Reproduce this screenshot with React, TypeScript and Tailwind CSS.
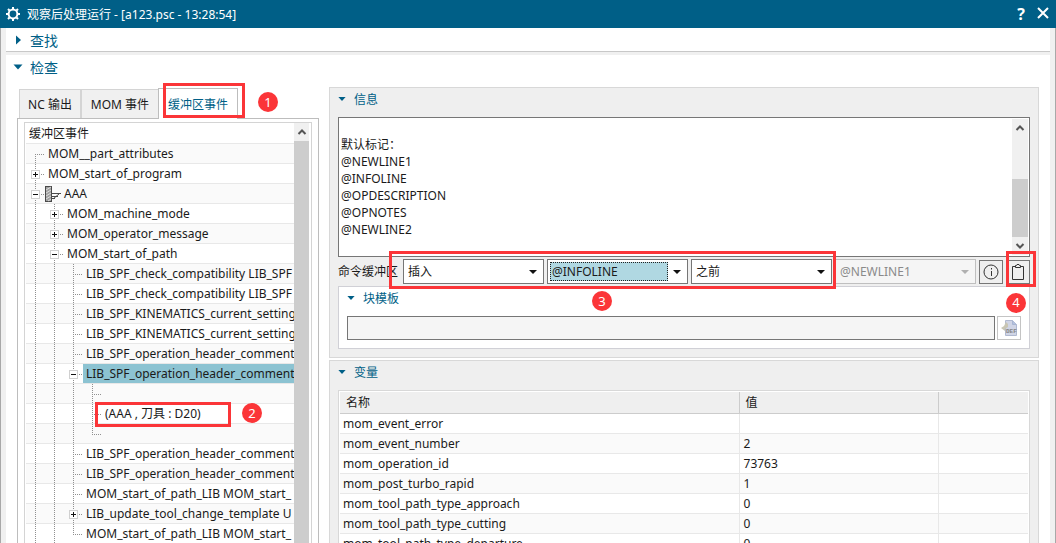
import React from "react";
import { clsx } from "clsx";

type Guide = "line" | "first" | "tee" | "last" | "plus" | "minus";

interface TreeNode {
  label: string;
  guides: Guide[];
  icon?: boolean;
  selected?: boolean;
  marked?: boolean;
}

const TREE: TreeNode[] = [
  { label: "MOM__part_attributes", guides: ["first"] },
  { label: "MOM_start_of_program", guides: ["plus"] },
  { label: "AAA", guides: ["minus"], icon: true },
  { label: "MOM_machine_mode", guides: ["line", "plus"] },
  { label: "MOM_operator_message", guides: ["line", "plus"] },
  { label: "MOM_start_of_path", guides: ["line", "minus"] },
  { label: "LIB_SPF_check_compatibility LIB_SPF", guides: ["line", "line", "tee"] },
  { label: "LIB_SPF_check_compatibility LIB_SPF", guides: ["line", "line", "tee"] },
  { label: "LIB_SPF_KINEMATICS_current_setting", guides: ["line", "line", "tee"] },
  { label: "LIB_SPF_KINEMATICS_current_setting", guides: ["line", "line", "tee"] },
  { label: "LIB_SPF_operation_header_comment", guides: ["line", "line", "tee"] },
  { label: "LIB_SPF_operation_header_comment", guides: ["line", "line", "minus"], selected: true },
  { label: "", guides: ["line", "line", "line", "tee"] },
  { label: "(AAA , 刀具 : D20)", guides: ["line", "line", "line", "tee"], marked: true },
  { label: "", guides: ["line", "line", "line", "last"] },
  { label: "LIB_SPF_operation_header_comment", guides: ["line", "line", "tee"] },
  { label: "LIB_SPF_operation_header_comment", guides: ["line", "line", "tee"] },
  { label: "MOM_start_of_path_LIB MOM_start_", guides: ["line", "line", "tee"] },
  { label: "LIB_update_tool_change_template U", guides: ["line", "line", "plus"] },
  { label: "MOM_start_of_path_LIB MOM_start_", guides: ["line", "line", "last"] },
];

const VARIABLES = [
  ["mom_event_error", ""],
  ["mom_event_number", "2"],
  ["mom_operation_id", "73763"],
  ["mom_post_turbo_rapid", "1"],
  ["mom_tool_path_type_approach", "0"],
  ["mom_tool_path_type_cutting", "0"],
  ["mom_tool_path_type_departure", "0"],
];

const INFO = "\n默认标记：\n@NEWLINE1\n@INFOLINE\n@OPDESCRIPTION\n@OPNOTES\n@NEWLINE2";

const GuideCell: React.FC<{ kind: Guide }> = ({ kind }) => {
  const box = kind === "plus" || kind === "minus";
  return (
    <svg width="19" height="20" viewBox="0 0 19 20" shapeRendering="crispEdges" className="shrink-0" fill="none">
      <path
        d={kind === "first" ? "M9.5 10V20" : kind === "last" ? "M9.5 0V11" : "M9.5 0V20"}
        stroke="#909090"
        strokeDasharray="1 1"
      />
      {kind !== "line" && <path d="M9 10.5H18" stroke="#909090" strokeDasharray="1 1" />}
      {box && <rect x="5.5" y="6.5" width="8" height="8" fill="#fff" stroke="#d0d0d0" />}
      {box && <path d={kind === "plus" ? "M7 10.5H12M9.5 8V13" : "M7 10.5H12"} stroke="#111" />}
    </svg>
  );
};

const ToolIcon = () => (
  <svg width="16" height="18" viewBox="0 0 16 18" className="shrink-0">
    <rect x="0.5" y="2.5" width="6" height="15" fill="#a0a0a0" stroke="#4a4a4a" />
    <path d="M1 6L6 3M1 9L6 6M1 12L6 9M1 15L6 12M3 17L6 15" stroke="#dcdcdc" />
    <path d="M7 9.5H16M7 12.5H13M8 15L14 10M7 14.5H10" stroke="#4a4a4a" fill="none" />
  </svg>
);

const Triangle: React.FC<{ open?: boolean; small?: boolean }> = ({ open = true, small }) => (
  <svg
    width={small ? 8 : 10}
    height={small ? 8 : 10}
    viewBox="0 0 10 10"
    className="shrink-0"
    fill="#005f87"
  >
    <path d={open ? "M0.5 2.5H9.5L5 7.5Z" : "M3 0.5V9.5L8 5Z"} />
  </svg>
);

const Heading: React.FC<{ children: React.ReactNode }> = ({ children }) => (
  <button type="button" className="flex h-[22px] items-center gap-2 text-[#005f87]">
    <Triangle small />
    {children}
  </button>
);

const Badge: React.FC<{ className?: string; children: React.ReactNode }> = ({ className, children }) => (
  <span
    className={clsx(
      "pointer-events-none absolute z-10 flex size-5 items-center justify-center rounded-full bg-[#fb3538] text-[13px] text-white",
      className
    )}
  >
    {children}
  </span>
);

const Marker: React.FC<{ className: string }> = ({ className }) => (
  <span className={clsx("pointer-events-none absolute z-10 border-3 border-[#fb3538]", className)} />
);

const Chevron: React.FC<{ down?: boolean }> = ({ down }) => (
  <svg width="10" height="10" viewBox="0 0 10 10" fill="none" stroke="#555" strokeWidth="2">
    <path d={down ? "M1.5 3L5 6.5L8.5 3" : "M1.5 7L5 3.5L8.5 7"} />
  </svg>
);

interface PickerProps {
  label: string;
  value: string;
  active?: boolean;
  disabled?: boolean;
}

const Picker: React.FC<PickerProps> = ({ label, value, active, disabled }) => (
  <div
    className={clsx(
      "flex h-[25px] min-w-0 items-center border p-[2px]",
      disabled ? "shrink grow basis-1 border-[#bfbfbf] bg-[#f5f5f5]" : "flex-1 border-[#767676] bg-white"
    )}
  >
    <select
      aria-label={label}
      disabled={disabled}
      defaultValue={value}
      className={clsx(
        "h-[19px] min-w-0 flex-1 appearance-none leading-[17px] outline-none",
        active ? "border border-dotted border-[#222] bg-[#b0d8e2] px-px" : "px-[2px]",
        disabled && "text-[#8a8a8a] opacity-100"
      )}
    >
      <option>{value}</option>
    </select>
    <svg width="17" height="8" viewBox="0 0 17 8" className="shrink-0" fill={disabled ? "#b0b0b0" : "#111"}>
      <path d="M5 2H13L9 6Z" />
    </svg>
  </div>
);

const TreeRow: React.FC<{ node: TreeNode; odd: boolean }> = ({ node, odd }) => (
  <li className={clsx("relative flex h-5 border-b border-[#e8e8e8]", odd ? "bg-white" : "bg-[#fafafa]")}>
    {node.guides.map((kind, i) => (
      <GuideCell key={i} kind={kind} />
    ))}
    {node.icon && <ToolIcon />}
    <span
      className={clsx(
        "h-[19px] flex-1 pl-[3px] leading-[19px] whitespace-nowrap",
        node.selected && "bg-[#8cc3d2]"
      )}
    >
      {node.label}
    </span>
    {node.marked && (
      <>
        <Marker className="-top-[2px] left-[69px] h-[25px] w-[136px]" />
        <Badge className="-top-px left-[216px]">2</Badge>
      </>
    )}
  </li>
);

const EventTree = () => (
  <div className="flex min-h-0 flex-1 border border-b-0 border-[#d4d4d4] pr-[2px] pl-px">
    <div className="min-w-0 flex-1 overflow-hidden">
      <div className="h-[21px] border-b border-[#e8e8e8] pl-[3px] leading-[21px]">缓冲区事件</div>
      <ul>
        {TREE.map((node, i) => (
          <TreeRow key={i} node={node} odd={i % 2 === 1} />
        ))}
      </ul>
    </div>
    <div className="flex w-[15px] shrink-0 flex-col bg-[#f0f0f0]">
      <div className="flex h-[18px] shrink-0 items-center justify-center">
        <Chevron />
      </div>
      <div className="flex-1 bg-[#cdcdcd]" />
    </div>
  </div>
);

const EventsPane = () => (
  <section className="flex w-[302px] shrink-0 flex-col">
    <div className="flex h-[31px] items-end pl-[2px]" role="tablist">
      <button type="button" role="tab" className="h-[29px] w-[63px] border border-r-2 border-b-0 border-[#d4d4d4] bg-[#f0f0f0]">
        NC 输出
      </button>
      <button type="button" role="tab" className="h-[29px] w-[76px] border-t border-[#d4d4d4] bg-[#f0f0f0]">
        MOM 事件
      </button>
      <div className="relative z-10 -mb-px">
        <button
          type="button"
          role="tab"
          aria-selected="true"
          className="h-[31px] w-20 border border-b-0 border-[#bdbdbd] bg-white text-[#005f87]"
        >
          缓冲区事件
        </button>
        <Marker className="-top-[5px] left-[5px] h-[35px] w-[82px]" />
        <Badge className="top-1 left-[100px]">1</Badge>
      </div>
    </div>
    <div className="flex min-h-0 flex-1 flex-col border border-b-0 border-[#bdbdbd] px-[6px] pt-[3px]">
      <EventTree />
    </div>
  </section>
);

const DefIcon = () => (
  <svg width="20" height="20" viewBox="0 0 20 20">
    <path d="M6.5 2.5H13.5L17.5 6.5V17.5H6.5Z" fill="#d0d5e6" stroke="#b0b9d0" />
    <path d="M13.5 2.5V6.5H17.5" fill="#b4c2de" stroke="#a9b6d3" />
    <path d="M2 10L5 8L7 4L9 6V9L6 11V13Z" fill="#c9c6b4" />
    <text x="7" y="15" fontSize="6" fontWeight="700" fill="#858585" fontFamily="Liberation Mono, monospace">
      DEF
    </text>
  </svg>
);

const InfoGroup = () => (
  <section className="shrink-0 border border-[#d8d8d8] bg-[#efefef] px-2 pb-2">
    <Heading>信息</Heading>
    <div className="mt-[7px] flex h-[140px] border border-[#767676] bg-white p-px">
      <textarea
        aria-label="信息"
        readOnly
        defaultValue={INFO}
        className="min-w-0 flex-1 resize-none overflow-hidden pl-px leading-[17px] outline-none"
      />
      <div className="flex w-4 shrink-0 flex-col items-center bg-[#f0f0f0] py-1">
        <Chevron />
        <div className="mt-auto mb-1 h-[58px] w-full bg-[#cdcdcd]" />
        <Chevron down />
      </div>
    </div>
    <div className="relative mt-[2px] flex items-center gap-[3px]">
      <span className="mr-[2px] w-[60px] shrink-0 whitespace-nowrap">命令缓冲区</span>
      <Picker label="操作" value="插入" />
      <Picker label="标记" value="@INFOLINE" active />
      <Picker label="位置" value="之前" />
      <Picker label="目标" value="@NEWLINE1" disabled />
      <button type="button" aria-label="说明" className="flex size-6 shrink-0 items-center justify-center border border-[#767676]">
        <svg width="16" height="16" viewBox="0 0 16 16" fill="none" stroke="#333">
          <circle cx="8" cy="8" r="7" />
          <path d="M8.5 7V12M8.5 4V5.5" />
        </svg>
      </button>
      <div className="relative shrink-0">
        <button type="button" aria-label="粘贴" className="flex size-6 items-center justify-center border border-[#767676]">
          <svg width="12" height="18" viewBox="0 0 12 18" fill="none" stroke="#333">
            <path d="M3 3.5H0.5V16.5H11.5V3.5H9" />
            <path d="M3.5 4.5V2.5H4.5L5 1.5H7L7.5 2.5H8.5V4.5Z" />
          </svg>
        </button>
        <Marker className="-top-[9px] left-0 h-9 w-[30px]" />
        <Badge className="top-[33px] left-0">4</Badge>
      </div>
      <Marker className="-top-2 left-[51px] h-[38px] w-[447px]" />
      <Badge className="top-8 left-[254px]">3</Badge>
    </div>
    <div className="mt-[2px] border border-[#d0d0d6] bg-white px-2 pb-2">
      <Heading>块模板</Heading>
      <div className="mt-[7px] flex items-center gap-[2px]">
        <input aria-label="块模板" readOnly className="h-6 min-w-0 flex-1 border border-[#767676] bg-[#f5f5f5]" />
        <button type="button" disabled aria-label="DEF" className="flex size-6 items-center justify-center border border-[#c4c4c4]">
          <DefIcon />
        </button>
      </div>
    </div>
  </section>
);

const VariablesGroup = () => (
  <section className="mt-[2px] min-h-0 flex-1 overflow-hidden border border-b-0 border-[#d8d8d8] bg-[#efefef] px-2">
    <Heading>变量</Heading>
    <div className="mt-[7px] border border-[#d8d8d8] bg-white p-px">
      <table className="w-full table-fixed border-collapse text-left">
        <thead>
          <tr className="h-[21px] border-b border-[#cccccc] bg-[#efefef]">
            <th className="w-[58%] border-r border-[#cccccc] pl-[6px] font-normal">名称</th>
            <th className="w-[29%] border-r border-[#cccccc] pl-[6px] font-normal">值</th>
            <th />
          </tr>
        </thead>
        <tbody>
          {VARIABLES.map(([name, value]) => (
            <tr key={name} className="h-5 border-b border-[#e8e8e8] even:bg-[#fafafa]">
              <td className="border-r border-[#e8e8e8] pl-[3px]">{name}</td>
              <td className="border-r border-[#e8e8e8] pl-1">{value}</td>
              <td />
            </tr>
          ))}
        </tbody>
      </table>
    </div>
  </section>
);

export default function App() {
  return (
    <div className="flex h-screen flex-col overflow-hidden bg-[#f0f0f0] font-['Noto_Sans','Noto_Sans_CJK_SC',sans-serif] text-[12px] leading-[17px] text-[#1a1a1a]">
      <header className="flex h-7 shrink-0 items-center bg-[#005f87] px-[6px] text-white">
        <svg width="14" height="14" viewBox="0 0 14 14" fill="none" stroke="#fff" className="mr-[7px]">
          <circle cx="7" cy="7" r="4.4" strokeWidth="2" />
          <path
            d="M7 0V2M7 12V14M0 7H2M12 7H14M2 2L3.5 3.5M10.5 10.5L12 12M12 2L10.5 3.5M3.5 10.5L2 12"
            strokeWidth="2"
          />
        </svg>
        <h1 className="flex-1">观察后处理运行 - [a123.psc - 13:28:54]</h1>
        <button type="button" aria-label="帮助" className="mr-[9px] w-3 text-[16px] font-bold">
          ?
        </button>
        <button type="button" aria-label="关闭">
          <svg width="14" height="14" viewBox="0 0 14 14" stroke="#fff" strokeWidth="2">
            <path d="M2 1L12 11M12 1L2 11" />
          </svg>
        </button>
      </header>

      <main className="flex min-h-0 flex-1 flex-col border-x border-[#a8a8a8] px-[5px]">
        <div className="shrink-0 border-b border-[#c8c8c8] bg-white pl-[7px]">
          <button type="button" className="flex h-[23px] items-center gap-[7px] pt-px text-[14px] text-[#005f87]">
            <Triangle open={false} />
            查找
          </button>
        </div>
        <div className="mt-[3px] flex min-h-0 flex-1 flex-col bg-white px-[11px]">
          <button type="button" className="-ml-1 flex h-6 items-center gap-[7px] text-[14px] text-[#005f87]">
            <Triangle />
            检查
          </button>
          <div className="mt-2 flex min-h-0 flex-1 gap-[10px]">
            <EventsPane />
            <div className="flex min-w-0 flex-1 flex-col">
              <InfoGroup />
              <VariablesGroup />
            </div>
          </div>
        </div>
      </main>
    </div>
  );
}
